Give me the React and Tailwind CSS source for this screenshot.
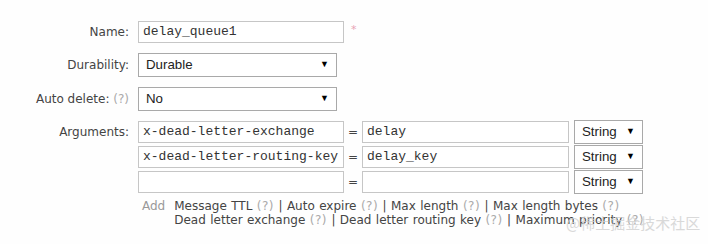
import React from "react";

const label = "w-[129px] shrink-0 text-right text-[12px] text-[#444]";
const sans = { fontFamily: '"DejaVu Sans", Verdana, sans-serif' };

function Select({ value, w }) {
  return (
    <div
      className={`${w} h-[24px] flex items-center justify-between border border-[#a9a9a9] bg-white pl-[7px] pr-[7px] text-[13.3px] text-[#222]`}
      style={{ fontFamily: '"Liberation Sans", Arial, sans-serif' }}
    >
      <span>{value}</span>
      <span className="text-[9px] text-black">▼</span>
    </div>
  );
}

function TextBox({ value, w }) {
  return (
    <div
      className={`${w} h-[22px] flex items-center border border-[#c6c6c6] bg-white pl-[4px] text-[13px] text-[#333] whitespace-pre`}
      style={{ fontFamily: '"Liberation Mono", "Courier New", monospace' }}
    >
      {value}
    </div>
  );
}

const Q = () => <span className="text-[#aaa] tracking-[0.5px]">(?)</span>;

export default function App() {
  const args = [
    ["x-dead-letter-exchange", "delay"],
    ["x-dead-letter-routing-key", "delay_key"],
    ["", ""],
  ];
  return (
    <div className="relative w-[708px] h-[244px] bg-[#fefefe] overflow-hidden" style={sans}>
      <div className="pt-[21px] flex flex-col">
        {/* Name */}
        <div className="flex items-center h-[22px] gap-[9px]">
          <div className={label}>Name:</div>
          <TextBox value="delay_queue1" w="w-[206px]" />
          <span className="text-[11px] text-[#e8a3b5] -mt-[4px] ml-[-2px]">*</span>
        </div>
        {/* Durability */}
        <div className="flex items-center h-[24px] gap-[9px] mt-[10px]">
          <div className={label}>Durability:</div>
          <Select value="Durable" w="w-[199px]" />
        </div>
        {/* Auto delete */}
        <div className="flex items-center h-[24px] gap-[9px] mt-[10px]">
          <div className={label}>
            Auto delete: <span className="text-[#aaa]">(?)</span>
          </div>
          <Select value="No" w="w-[199px]" />
        </div>
        {/* Arguments */}
        <div className="flex gap-[9px] mt-[9px]">
          <div className={`${label} h-[24px] leading-[24px]`}>Arguments:</div>
          <div className="flex flex-col">
            <div className="flex flex-col gap-[1px]">
              {args.map(([k, v], i) => (
                <div key={i} className="flex items-center h-[24px]">
                  <TextBox value={k} w="w-[206px]" />
                  <span className="w-[18px] text-center text-[12px] text-[#444]">=</span>
                  <TextBox value={v} w="w-[207px]" />
                  <div className="ml-[5px]">
                    <Select value="String" w="w-[69px]" />
                  </div>
                </div>
              ))}
            </div>
            <div className="flex gap-[9px] ml-[4px] mt-[5px] text-[12px] leading-[14px] text-[#444] whitespace-nowrap [word-spacing:0.6px]">
              <span className="text-[#999]">Add</span>
              <div className="flex flex-col">
                <div>
                  Message TTL <Q /> | Auto expire <Q /> | Max length <Q /> | Max length bytes <Q />
                </div>
                <div>
                  Dead letter exchange <Q /> | Dead letter routing key <Q /> | Maximum priority <Q />
                </div>
              </div>
            </div>
          </div>
        </div>
      </div>
      <div
        className="absolute left-[566px] top-[212px] text-[15px] text-[#d0d0d0] opacity-80"
        style={{ fontFamily: '"Noto Sans CJK SC", sans-serif' }}
      >
        @稀土掘金技术社区
      </div>
    </div>
  );
}
